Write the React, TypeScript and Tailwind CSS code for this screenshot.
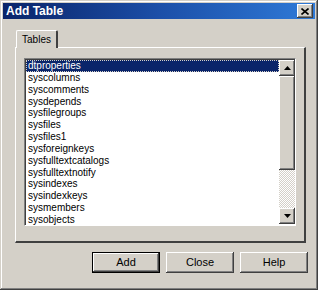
const tables = [
  "dtproperties",
  "syscolumns",
  "syscomments",
  "sysdepends",
  "sysfilegroups",
  "sysfiles",
  "sysfiles1",
  "sysforeignkeys",
  "sysfulltextcatalogs",
  "sysfulltextnotify",
  "sysindexes",
  "sysindexkeys",
  "sysmembers",
  "sysobjects",
]

// classic raised 3d edge
const raised =
  "shadow-[inset_-1px_-1px_#404040,inset_1px_1px_#ffffff,inset_-2px_-2px_#808080,inset_2px_2px_#d4d0c8]"

function Arrow({ up }: { up?: boolean }) {
  return (
    <svg width="7" height="4" viewBox="0 0 7 4" className={up ? "" : "rotate-180"}>
      <polygon points="3.5,0 7,4 0,4" fill="#000" />
    </svg>
  )
}

function DialogButton({ label, isDefault }: { label: string; isDefault?: boolean }) {
  return (
    <button
      className={`w-[68px] h-[21px] bg-[#d4d0c8] text-[11px] text-black flex items-center justify-center ${
        isDefault
          ? "border border-black shadow-[inset_-1px_-1px_#404040,inset_1px_1px_#ffffff,inset_-2px_-2px_#808080]"
          : raised
      }`}
    >
      {label}
    </button>
  )
}

export default function App() {
  return (
    <div
      className="w-[318px] h-[290px] bg-[#d4d0c8] flex flex-col p-[3px] shadow-[inset_-1px_-1px_#404040,inset_1px_1px_#d4d0c8,inset_-2px_-2px_#808080,inset_2px_2px_#ffffff]"
      style={{ fontFamily: '"Liberation Sans", Arial, sans-serif' }}
    >
      {/* Title bar */}
      <div className="h-[16px] flex items-center justify-between pl-[3px] pr-[2px] bg-gradient-to-r from-[#0a246a] via-[#1c4fa8] to-[#2f7ad8]">
        <span className="text-white font-bold text-[12px] leading-none">Add Table</span>
        <div className={`w-[16px] h-[14px] bg-[#d4d0c8] flex items-center justify-center ${raised}`}>
          <svg width="8" height="7" viewBox="0 0 8 7">
            <path d="M0.5 0.5 L7.5 6.5 M7.5 0.5 L0.5 6.5" stroke="#000" strokeWidth="1.6" />
          </svg>
        </div>
      </div>

      {/* Tab control */}
      <div className="flex flex-col pl-[12px] pr-[9px] pt-[11px]">
        <div className="flex">
          <div className="ml-[1px] w-[42px] h-[18px] flex items-center justify-center text-[10px] text-black border-t border-l border-white border-r-2 border-r-[#404040] rounded-t-[2px] -mb-px relative z-10 bg-[#d4d0c8]">
            Tables
          </div>
        </div>
        <div className="h-[196px] flex flex-col border-t border-l border-white border-r-2 border-b-2 border-r-[#404040] border-b-[#404040] pt-[10px] pl-[8px] pr-[8px]">
          {/* List box */}
          <div className="h-[168px] flex bg-white border-t border-l border-[#808080] border-r border-b border-r-white border-b-white shadow-[inset_1px_1px_#404040]">
            <ul className="flex-1 pt-[1px] pl-[1px] text-[10px] text-black">
              {tables.map((t, i) => (
                <li
                  key={t}
                  className={`h-[11.85px] leading-[11.85px] pl-[2px] ${
                    i === 0 ? "bg-[#0a246a] text-white outline outline-1 outline-dotted outline-[#d4d0c8] -outline-offset-1" : ""
                  }`}
                >
                  {t}
                </li>
              ))}
            </ul>
            {/* Scroll bar */}
            <div className="w-[16px] mt-[1px] mb-[1px] flex flex-col bg-[#e8e6e1]">
              <div className={`h-[16px] bg-[#d4d0c8] flex items-center justify-center ${raised}`}>
                <Arrow up />
              </div>
              <div className={`h-[94px] bg-[#d4d0c8] ${raised}`} />
              <div className="flex-1 bg-[repeating-conic-gradient(#ffffff_0_25%,#d4d0c8_0_50%)] bg-[length:2px_2px]" />
              <div className={`h-[16px] bg-[#d4d0c8] flex items-center justify-center ${raised}`}>
                <Arrow />
              </div>
            </div>
          </div>
        </div>
      </div>

      {/* Buttons */}
      <div className="flex justify-end gap-[6px] pr-[7px] mt-[9px]">
        <DialogButton label="Add" isDefault />
        <DialogButton label="Close" />
        <DialogButton label="Help" />
      </div>
    </div>
  )
}
